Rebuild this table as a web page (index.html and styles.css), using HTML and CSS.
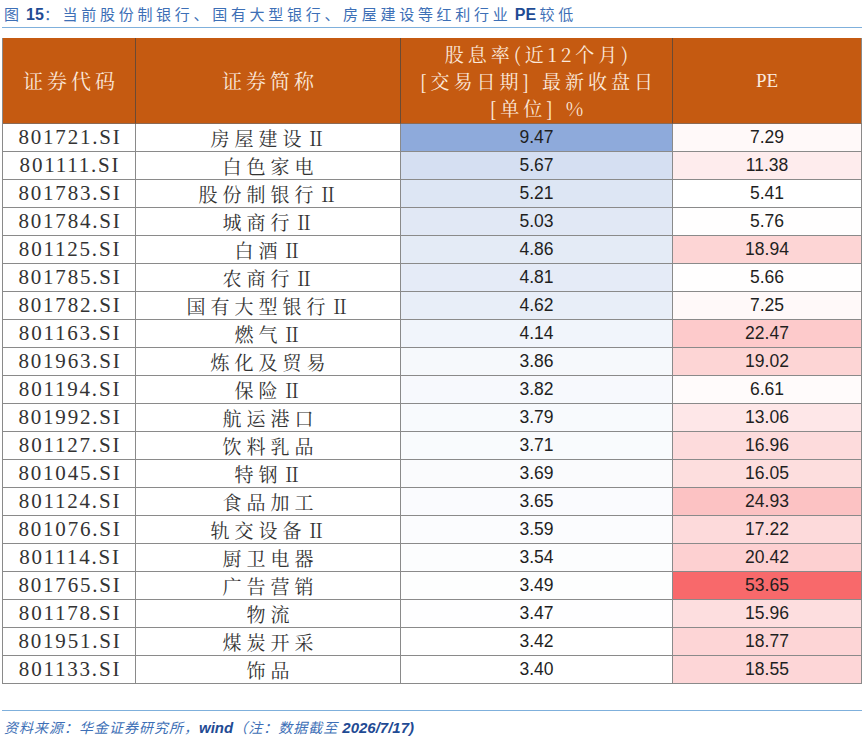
FILE: index.html
```html
<!DOCTYPE html>
<html lang="zh-CN">
<head>
<meta charset="utf-8">
<title>图 15</title>
<link rel="stylesheet" href="styles.css">
</head>
<body>
<div class="page">
  <div class="title"><span class="cn">图</span> <b>15</b><span class="cn">：当前股份制银行、国有大型银行、房屋建设等红利行业</span> <b>PE</b> <span class="cn">较低</span></div>
  <table class="grid">
    <colgroup>
      <col class="c1"><col class="c2"><col class="c3"><col class="c4">
    </colgroup>
    <thead>
      <tr>
        <th class="h-cn">证券代码</th>
        <th class="h-cn">证券简称</th>
        <th class="h-multi"><div>股息率(近12个月)</div><div>[交易日期] 最新收盘日</div><div>[单位] %</div></th>
        <th class="h-pe last">PE</th>
      </tr>
    </thead>
    <tbody>
      <tr><td class="code">801721.SI</td><td class="name">房屋建设Ⅱ</td><td class="num" style="background:rgb(142,170,219)">9.47</td><td class="num last" style="background:rgb(255,249,249)">7.29</td></tr>
      <tr><td class="code">801111.SI</td><td class="name">白色家电</td><td class="num" style="background:rgb(213,223,242)">5.67</td><td class="num last" style="background:rgb(254,236,237)">11.38</td></tr>
      <tr><td class="code">801783.SI</td><td class="name">股份制银行Ⅱ</td><td class="num" style="background:rgb(221,230,244)">5.21</td><td class="num last" style="background:rgb(255,255,255)">5.41</td></tr>
      <tr><td class="code">801784.SI</td><td class="name">城商行Ⅱ</td><td class="num" style="background:rgb(225,232,245)">5.03</td><td class="num last" style="background:rgb(255,254,254)">5.76</td></tr>
      <tr><td class="code">801125.SI</td><td class="name">白酒Ⅱ</td><td class="num" style="background:rgb(228,235,246)">4.86</td><td class="num last" style="background:rgb(253,213,213)">18.94</td></tr>
      <tr><td class="code">801785.SI</td><td class="name">农商行Ⅱ</td><td class="num" style="background:rgb(229,235,247)">4.81</td><td class="num last" style="background:rgb(255,254,254)">5.66</td></tr>
      <tr><td class="code">801782.SI</td><td class="name">国有大型银行Ⅱ</td><td class="num" style="background:rgb(232,238,248)">4.62</td><td class="num last" style="background:rgb(255,249,249)">7.25</td></tr>
      <tr><td class="code">801163.SI</td><td class="name">燃气Ⅱ</td><td class="num" style="background:rgb(241,245,251)">4.14</td><td class="num last" style="background:rgb(253,202,203)">22.47</td></tr>
      <tr><td class="code">801963.SI</td><td class="name">炼化及贸易</td><td class="num" style="background:rgb(246,249,252)">3.86</td><td class="num last" style="background:rgb(253,213,213)">19.02</td></tr>
      <tr><td class="code">801194.SI</td><td class="name">保险Ⅱ</td><td class="num" style="background:rgb(247,249,253)">3.82</td><td class="num last" style="background:rgb(255,251,251)">6.61</td></tr>
      <tr><td class="code">801992.SI</td><td class="name">航运港口</td><td class="num" style="background:rgb(248,250,253)">3.79</td><td class="num last" style="background:rgb(254,231,232)">13.06</td></tr>
      <tr><td class="code">801127.SI</td><td class="name">饮料乳品</td><td class="num" style="background:rgb(249,251,253)">3.71</td><td class="num last" style="background:rgb(253,219,220)">16.96</td></tr>
      <tr><td class="code">801045.SI</td><td class="name">特钢Ⅱ</td><td class="num" style="background:rgb(250,251,253)">3.69</td><td class="num last" style="background:rgb(253,222,222)">16.05</td></tr>
      <tr><td class="code">801124.SI</td><td class="name">食品加工</td><td class="num" style="background:rgb(250,251,254)">3.65</td><td class="num last" style="background:rgb(252,194,195)">24.93</td></tr>
      <tr><td class="code">801076.SI</td><td class="name">轨交设备Ⅱ</td><td class="num" style="background:rgb(251,252,254)">3.59</td><td class="num last" style="background:rgb(253,218,219)">17.22</td></tr>
      <tr><td class="code">801114.SI</td><td class="name">厨卫电器</td><td class="num" style="background:rgb(252,253,254)">3.54</td><td class="num last" style="background:rgb(253,208,209)">20.42</td></tr>
      <tr><td class="code">801765.SI</td><td class="name">广告营销</td><td class="num" style="background:rgb(253,254,254)">3.49</td><td class="num last" style="background:rgb(248,105,107)">53.65</td></tr>
      <tr><td class="code">801178.SI</td><td class="name">物流</td><td class="num" style="background:rgb(254,254,255)">3.47</td><td class="num last" style="background:rgb(253,222,223)">15.96</td></tr>
      <tr><td class="code">801951.SI</td><td class="name">煤炭开采</td><td class="num" style="background:rgb(255,255,255)">3.42</td><td class="num last" style="background:rgb(253,213,214)">18.77</td></tr>
      <tr><td class="code">801133.SI</td><td class="name">饰品</td><td class="num" style="background:rgb(255,255,255)">3.40</td><td class="num last" style="background:rgb(253,214,215)">18.55</td></tr>
    </tbody>
  </table>
  <div class="source"><span class="cn">资料来源：华金证券研究所，</span><b>wind</b><span class="cn">（注：数据截至 </span><b>2026/7/17)</b></div>
</div>
</body>
</html>
```
FILE: styles.css
```css
html, body {
  margin: 0;
  padding: 0;
  background: #ffffff;
}

.page {
  width: 864px;
  padding: 0 2px;
  box-sizing: border-box;
  font-family: "Noto Sans CJK SC", sans-serif;
}

.title {
  padding-top: 4px;
  padding-bottom: 3px;
  line-height: 20px;
  height: 20px;
  font-size: 15px;
  color: #3d6fb6;
  border-bottom: 1px solid #7fb0dc;
  margin-bottom: 10px;
  padding-left: 2px;
  white-space: nowrap;
}

.title .cn {
  letter-spacing: 3.7px;
}

.title b {
  font-family: "Liberation Sans", Arial, sans-serif;
  font-weight: bold;
  color: #1f4b94;
  font-size: 16px;
}

.grid {
  width: 859px;
  border-collapse: separate;
  border-spacing: 0;
  table-layout: fixed;
  border-left: 1px solid #8a8a8a;
}

.c1 { width: 133px; }
.c2 { width: 265px; }
.c3 { width: 272px; }
.c4 { width: 189px; }

.grid th {
  background: #c55a11;
  color: #fbe9dc;
  font-weight: normal;
  height: 85px;
  padding: 0;
  border-right: 1px solid #6b4a33;
  border-bottom: 1px solid #8a6a55;
  text-align: center;
  vertical-align: middle;
  font-family: "Noto Serif CJK SC", "Liberation Serif", "Noto Sans CJK SC", serif;
  font-size: 20px;
}

.grid th.h-cn {
  letter-spacing: 4px;
  padding-left: 4px;
}

.grid th.h-multi {
  line-height: 27px;
  letter-spacing: 4px;
  font-size: 19px;
  padding-left: 4px;
}

.grid th.h-pe {
  font-family: "Liberation Serif", serif;
  font-size: 19px;
}

.grid th.last,
.grid td.last {
  border-right: 1px solid #8a8a8a;
}

.grid td {
  height: 27px;
  padding: 0;
  line-height: 27px;
  text-align: center;
  vertical-align: middle;
  border-right: 1px solid #8a8a8a;
  border-bottom: 1px solid #8a8a8a;
  color: #262626;
  white-space: nowrap;
  overflow: hidden;
}

.grid td.code {
  font-family: "Liberation Serif", serif;
  font-size: 21px;
  letter-spacing: 1.8px;
  padding-left: 2px;
  color: #333333;
}

.grid td.name {
  font-family: "Noto Serif CJK SC", "Noto Sans CJK SC", serif;
  font-size: 19px;
  letter-spacing: 5px;
  padding-left: 5px;
  color: #333333;
}

.grid td.num {
  font-family: "Liberation Sans", Arial, sans-serif;
  font-size: 17.5px;
  color: #1f1f1f;
}

.source {
  margin-top: 26px;
  border-top: 1px solid #7fb0dc;
  padding-top: 6px;
  padding-left: 2px;
  line-height: 20px;
  font-size: 14px;
  font-style: italic;
  color: #3d6fb6;
  white-space: nowrap;
}

.source .cn {
  letter-spacing: 1px;
}

.source b {
  font-family: "Liberation Sans", Arial, sans-serif;
  font-weight: bold;
  color: #1f4b94;
  font-size: 15px;
}
```
